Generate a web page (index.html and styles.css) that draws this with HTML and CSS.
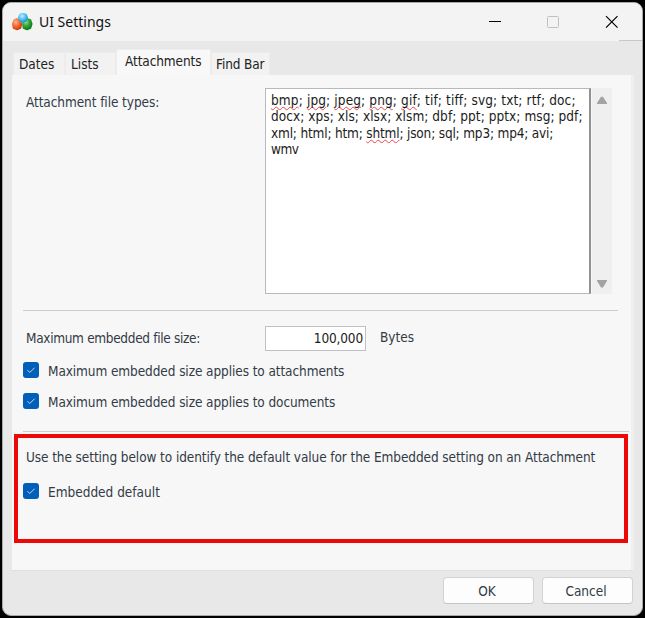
FILE: index.html
```html
<!DOCTYPE html>
<html lang="en">
<head>
<meta charset="utf-8">
<title>UI Settings</title>
<link rel="stylesheet" href="styles.css">
</head>
<body>
<div class="window">
  <header class="titlebar">
    <svg class="logo" width="22" height="20" viewBox="0 0 22 20">
      <defs>
        <radialGradient id="o" cx=".35" cy=".3" r=".75"><stop offset="0" stop-color="#ffb896"/><stop offset=".5" stop-color="#f4703a"/><stop offset="1" stop-color="#c9400f"/></radialGradient>
        <radialGradient id="g" cx=".35" cy=".3" r=".75"><stop offset="0" stop-color="#8fe08a"/><stop offset=".5" stop-color="#2fa93a"/><stop offset="1" stop-color="#0f761c"/></radialGradient>
        <radialGradient id="b" cx=".4" cy=".3" r=".75"><stop offset="0" stop-color="#b8eeff"/><stop offset=".55" stop-color="#52c0f4"/><stop offset="1" stop-color="#2290cc"/></radialGradient>
      </defs>
      <path d="M4.500 7 8 8l1.500 4-1 4L5 17.500 1.500 16 .8 12 2 8.500z" fill="url(#o)" stroke="url(#o)" stroke-width="1.500" stroke-linejoin="round"/>
      <path d="M15.500 7 18.500 8l1.300 4-1.300 4-3.500 1.500-3.500-1.500-.7-4L12.500 8z" fill="url(#g)" stroke="url(#g)" stroke-width="1.500" stroke-linejoin="round"/>
      <path d="M11 1.600 14 2.500l1.300 3L14 8.800 11 10 8 8.800 6.700 5.500 8 2.500z" fill="url(#b)" stroke="url(#b)" stroke-width="1.500" stroke-linejoin="round"/>
    </svg>
    <span class="title">UI Settings</span>
    <svg class="controls" width="132" height="14" viewBox="0 0 132 14">
      <path d="M1 6.500h12" stroke="#000"/>
      <rect x="59.500" y="1.500" width="11" height="11" rx="1" fill="none" stroke="#c0c0c0"/>
      <path d="M118 1.200l11.500 11.500M129.500 1.200l-11.500 11.500" stroke="#000" stroke-width="1.200"/>
    </svg>
  </header>
  <nav class="tabs">
    <span class="tab dates">Dates</span>
    <span class="tab lists">Lists</span>
    <span class="tab active">Attachments</span>
    <span class="tab find">Find Bar</span>
  </nav>
  <main class="panel">
    <section class="types">
      <span class="label types-label">Attachment file types:</span>
      <div class="textarea">
        <div class="line l1"><u>bmp</u>; <u>jpg</u>; <u>jpeg</u>; <u>png</u>; <u>gif</u>; tif; tiff; svg; txt; rtf; doc;</div>
        <div class="line l2">docx; xps; xls; xlsx; xlsm; dbf; ppt; pptx; msg; pdf;</div>
        <div class="line l3">xml; html; htm; <u>shtml</u>; json; sql; mp3; mp4; avi;</div>
        <div class="line l4">wmv</div>
      </div>
      <div class="scroll">
        <svg width="12" height="8" viewBox="0 0 12 8"><path d="M5 .7h2L11 7v1H1V7z" fill="#a3a3a3"/></svg>
        <svg width="12" height="8" viewBox="0 0 12 8"><path d="M5 7.500h2L11 1V0H1v1z" fill="#a3a3a3"/></svg>
      </div>
    </section>
    <hr class="rule first">
    <section class="size">
      <span class="label size-label">Maximum embedded file size:</span>
      <div class="number">100,000</div>
      <span class="label bytes">Bytes</span>
    </section>
    <div class="check c1"><svg class="box" width="16" height="16" viewBox="0 0 16 16"><rect width="16" height="16" rx="3" fill="#005fb8"/><path d="M4.500 8.200l2.300 2.300 4.800-4.800" fill="none" stroke="#c4dcf2"/></svg><span class="label k1">Maximum embedded size applies to attachments</span></div>
    <div class="check c2"><svg class="box" width="16" height="16" viewBox="0 0 16 16"><rect width="16" height="16" rx="3" fill="#005fb8"/><path d="M4.500 8.200l2.300 2.300 4.800-4.800" fill="none" stroke="#c4dcf2"/></svg><span class="label k2">Maximum embedded size applies to documents</span></div>
    <hr class="rule second">
    <section class="highlight">
      <p class="label hint">Use the setting below to identify the default value for the Embedded setting on an Attachment</p>
      <div class="check c3"><svg class="box" width="16" height="16" viewBox="0 0 16 16"><rect width="16" height="16" rx="3" fill="#005fb8"/><path d="M4.500 8.200l2.300 2.300 4.800-4.800" fill="none" stroke="#c4dcf2"/></svg><span class="label k3">Embedded default</span></div>
    </section>
  </main>
  <footer class="actions">
    <button class="ok">OK</button>
    <button class="cancel">Cancel</button>
  </footer>
</div>
</body>
</html>
```
FILE: styles.css
```css
* { box-sizing: border-box; }
html { background: #000; }
body {
  margin: 0;
  padding: 2px;
  width: 645px;
  height: 618px;
  overflow: hidden;
  background: #000;
  font: 13px/16px "DejaVu Sans Condensed", "Noto Sans", sans-serif;
  color: #222;
}
.window {
  width: 641px;
  height: 614px;
  border: 1px solid #a8a8a8;
  border-radius: 9px;
  background: #e8e8e8;
  overflow: hidden;
  display: flex;
  flex-direction: column;
}
.titlebar {
  height: 38px;
  flex: none;
  display: flex;
  align-items: center;
  padding: 0 22px 0 9px;
  background: linear-gradient(#c8c8c8, #c8c8c8) right bottom / 23px 1px no-repeat #f3f3f3;
}
.title {
  margin-left: 5px;
  font: 14px/20px "Noto Sans", sans-serif;
  color: #111;
  white-space: nowrap;
}
.controls { margin-left: auto; }
.tabs {
  height: 34px;
  flex: none;
  display: flex;
  align-items: flex-end;
  padding-left: 10px;
}
.tab {
  height: 23px;
  padding: 3px 0 0 5px;
  background: #f2f2f2;
  border: 1px solid #ececec;
  border-bottom: 0;
  white-space: nowrap;
  font-size: 13.500px;
}
.dates { width: 52px; }
.lists { width: 51px; }
.active { width: 95px; height: 26px; background: #f8f8f8; padding: 3px 0 0 8px; letter-spacing: -.1px; }
.find { width: 59px; padding-left: 4px; letter-spacing: -.12px; }
.panel {
  margin-left: 9px;
  width: 622px;
  height: 496px;
  flex: none;
  background: #f7f7f7;
  border-right: 3px solid #efefef;
  border-bottom: 1px solid #dfdfdf;
}
.label { color: #333b46; white-space: nowrap; font-size: 13.500px; }
.types {
  height: 219px;
  padding: 13px 0 0 14px;
  display: grid;
  grid-template-columns: 239px 326px 20px;
  align-items: start;
}
.types-label { padding-top: 6px; letter-spacing: -.08px; }
.textarea {
  height: 206px;
  padding: 3px 0 0 5px;
  background: #fff;
  border: 1px solid #b9b9bd;
  border-right: 2px solid #929292;
  color: #1c1c1c;
  font-size: 13.500px;
}
.line { height: 16.300px; white-space: nowrap; }
.l1 { letter-spacing: .13px; }
.l2 { letter-spacing: .06px; }
.l3 { letter-spacing: -.18px; }
.l4 { letter-spacing: -.5px; }
u { text-decoration: underline wavy #f04444 1px; text-underline-offset: 1px; text-decoration-skip-ink: none; }
.scroll {
  height: 206px;
  margin-left: 1px;
  width: 20px;
  background: #efefef;
  display: flex;
  flex-direction: column;
  justify-content: space-between;
  padding: 8px 4px 6px;
}
.rule { border: 0; height: 1px; background: #c9cdd1; }
.first { margin: 16px 13px 0 11px; }
.size {
  height: 40px;
  margin: 15px 0 0 14px;
  display: grid;
  grid-template-columns: 239px 101px auto;
  align-items: start;
}
.size-label { padding-top: 4px; letter-spacing: -.32px; }
.number {
  height: 25px;
  padding: 3px 2px 0 0;
  border: 1px solid #c0c0c6;
  background: #fff;
  color: #1c1c1c;
  text-align: right;
  font-size: 13.500px;
  letter-spacing: -.15px;
}
.bytes { padding: 3px 0 0 14px; }
.check { display: flex; align-items: center; height: 16px; gap: 9px; }
.check .label { padding-top: 2px; }
.k1, .k2 { letter-spacing: -.09px; }
.c1 { margin: -4px 0 0 11px; }
.c2 { margin: 15px 0 0 11px; }
.second { margin: 22px 2px 0 11px; }
.highlight {
  margin: 2px 0 0 2px;
  width: 614px;
  height: 109px;
  border: 4px solid #ee0707;
  padding: 11px 0 0 5px;
}
.hint { margin: 0 0 0 3px; letter-spacing: -.09px; }
.c3 { margin-top: 18px; }
.actions {
  display: flex;
  justify-content: flex-end;
  gap: 8px;
  padding: 6px 9px 0 0;
}
button {
  width: 91px;
  height: 27px;
  padding: 0 3px 0 0;
  border: 1px solid #d2d2d2;
  border-bottom-color: #c4c4c4;
  border-radius: 4px;
  background: #fdfdfd;
  color: #333b46;
  font: 13.500px/16px "DejaVu Sans Condensed", "Noto Sans", sans-serif;
}
```
